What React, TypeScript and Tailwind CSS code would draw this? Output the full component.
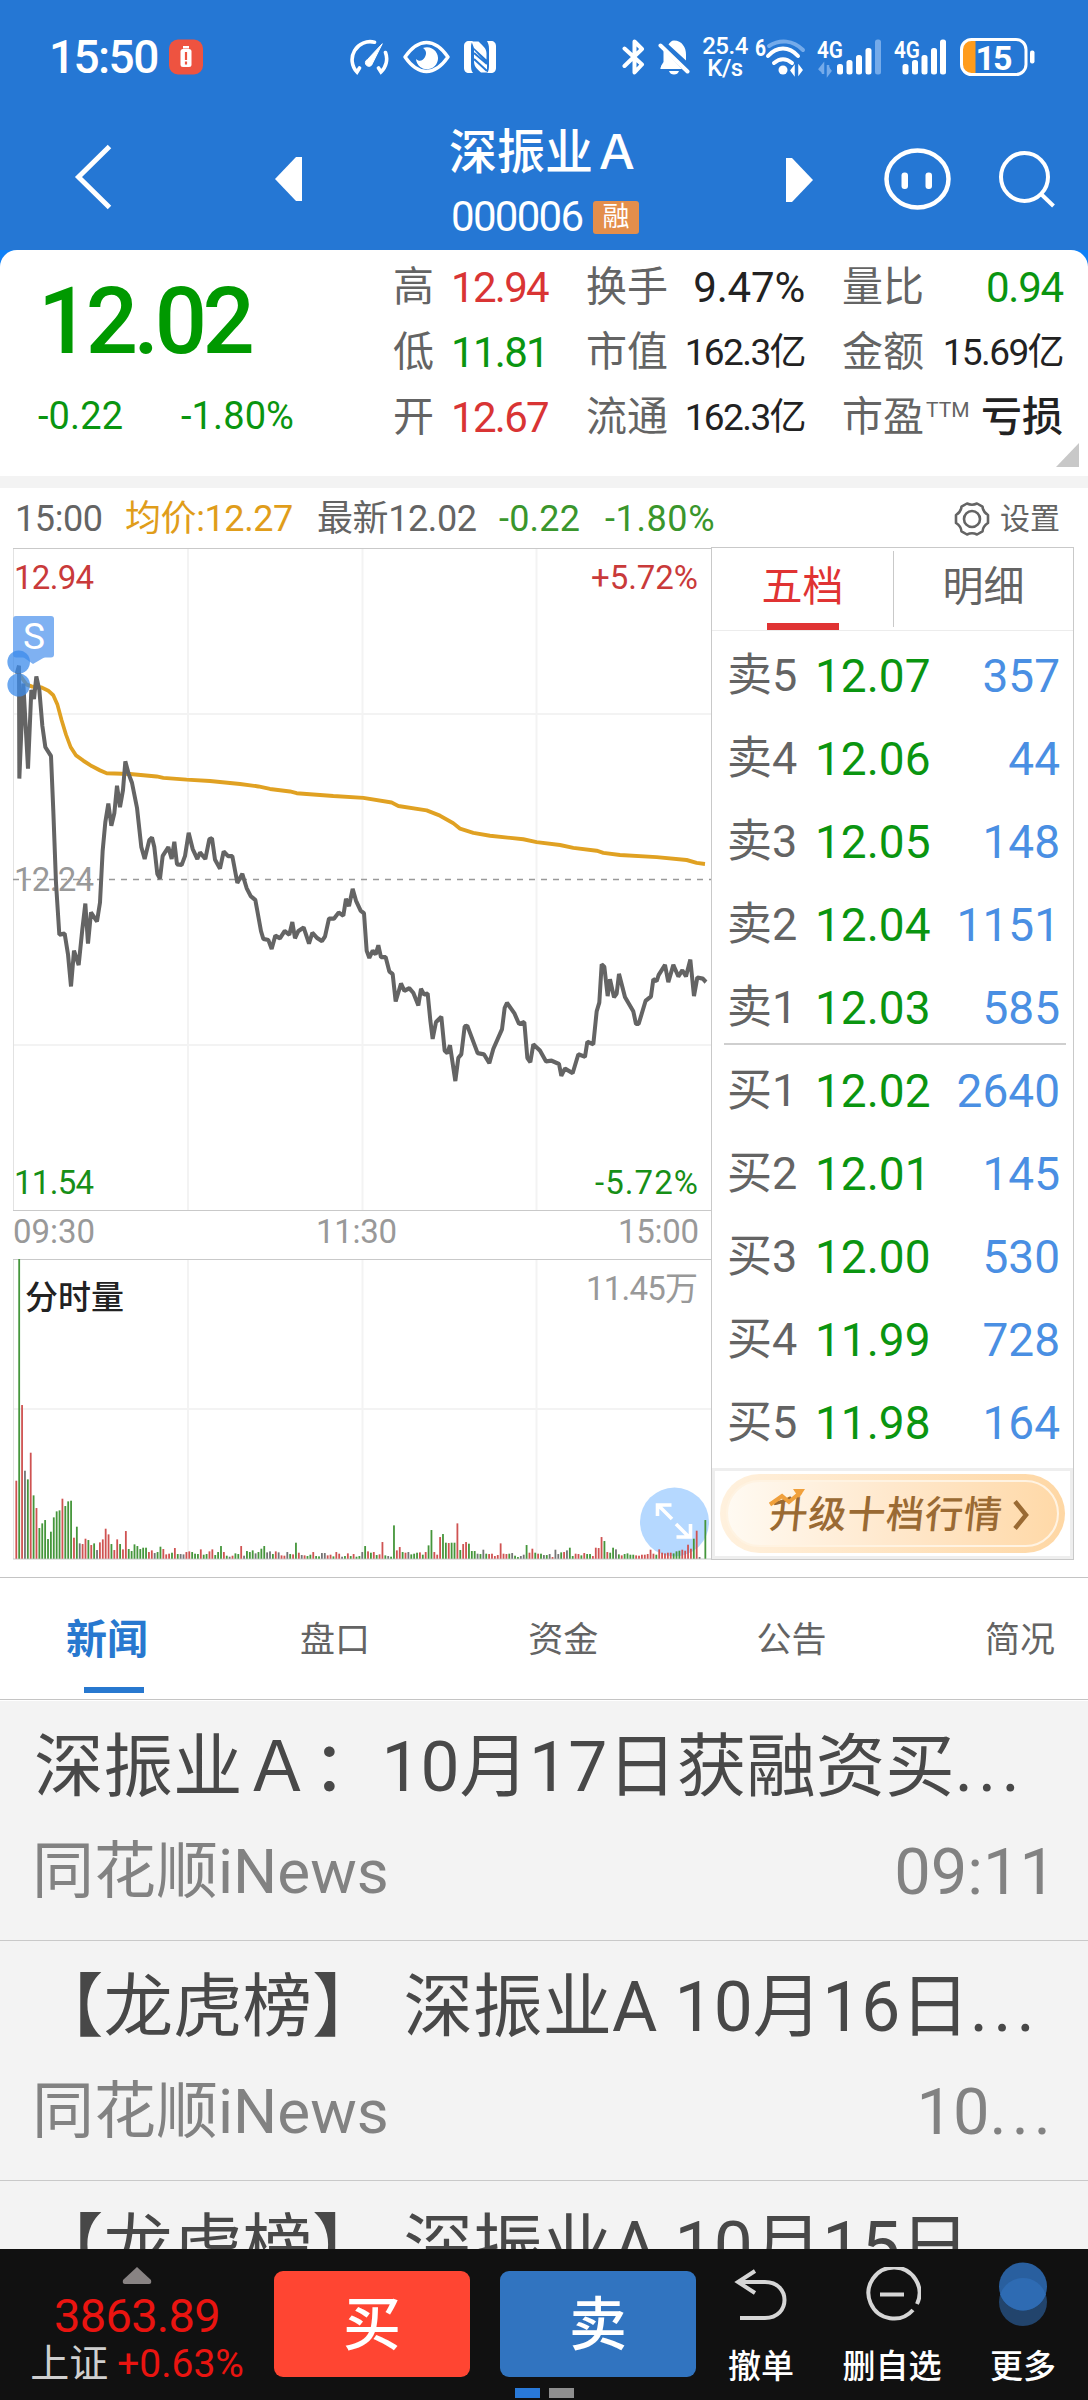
import React from 'react';

const PRICE_POINTS =
    '50,375 57,352 58,668 70,402 84,640 94,420 102,445 109,382 118,420 127,520 136,580 153,605 160,760 168,960 178,1105 194,1102 204,1160 213,1250 222,1150 236,1190 247,1090 256,1018 264,1130 273,1043 291,1068 300,1015 308,870 316,790 325,738 334,800 343,765 351,688 360,748 369,700 376,620 386,655 396,680 411,750 424,860 434,893 448,840 456,833 463,860 472,935 480,948 488,885 505,860 515,893 523,845 531,908 545,910 555,885 566,820 578,865 592,893 600,875 616,893 628,838 636,835 645,895 660,920 671,872 684,885 697,885 712,960 727,935 740,975 752,997 766,1008 783,1095 790,1117 805,1120 815,1145 826,1108 840,1115 854,1095 868,1105 877,1070 885,1115 895,1095 911,1085 927,1130 937,1100 952,1115 966,1123 975,1110 987,1060 1002,1060 1016,1043 1030,1052 1038,1005 1047,1025 1058,977 1068,1010 1082,1038 1092,1045 1100,1150 1108,1170 1118,1150 1127,1160 1135,1135 1143,1168 1157,1168 1168,1208 1178,1215 1187,1292 1203,1242 1213,1262 1228,1255 1240,1268 1255,1303 1263,1257 1272,1272 1283,1270 1291,1345 1298,1397 1308,1350 1324,1335 1334,1430 1342,1437 1350,1415 1366,1515 1375,1450 1384,1440 1394,1362 1402,1360 1433,1437 1452,1440 1468,1465 1480,1425 1506,1370 1514,1310 1521,1296 1543,1325 1557,1355 1573,1350 1582,1450 1591,1462 1600,1412 1620,1430 1638,1460 1655,1458 1677,1467 1684,1500 1695,1480 1718,1493 1735,1440 1755,1447 1762,1405 1780,1412 1790,1320 1798,1295 1805,1188 1813,1195 1823,1277 1830,1230 1842,1280 1850,1270 1857,1215 1875,1280 1900,1320 1908,1355 1916,1355 1937,1290 1953,1278 1960,1230 1970,1235 1976,1218 1995,1190 2005,1238 2020,1190 2035,1222 2047,1205 2058,1222 2071,1175 2082,1277 2092,1225 2108,1228 2118,1238';

const AVG_POINTS =
    '57,375 80,405 95,410 125,413 145,422 160,435 172,460 185,505 198,545 212,580 228,603 250,618 275,633 300,645 320,653 390,655 470,662 490,666 560,671 630,675 720,683 775,690 810,697 870,704 890,709 1000,717 1090,722 1175,735 1195,745 1280,757 1320,772 1360,793 1380,808 1420,820 1470,828 1570,838 1610,846 1680,854 1720,862 1790,870 1810,876 1860,882 1970,888 2060,896 2090,904 2115,907';

// one entry per minute: direction (r up, g down, k flat) + height
const VOLUME =
    'r234 g899 r461 k264 g238 r318 g190 r152 g92 g106 g116 g59 g81 g124 g142 g145 r180 g158 g172 g174 r63 g96 k46 r44 r60 g56 r41 g46 k26 r49 r58 r90 r73 g44 r26 r58 g44 r28 r83 g29 g23 g43 g38 g29 g33 g33 r20 r25 k17 g20 g36 r29 r13 r15 g18 r32 g14 k14 k13 r20 r22 g20 g15 g14 r28 g12 g14 r22 r28 g11 g20 g38 r20 g9 k6 r9 g16 g14 r38 k9 g23 g20 g25 k16 g20 g30 g38 k19 k22 g14 r22 k19 r10 r9 k20 g14 r13 g48 r18 k11 r10 g8 g12 r20 g8 g7 k17 k17 r10 r12 g7 r20 r15 k6 g8 r16 g8 r14 g6 g8 ' +
    'k20 g38 r22 g18 r20 g11 r13 r50 g10 k8 g6 g100 r25 r35 g20 r18 k20 g13 g15 g18 r19 g12 r20 g40 g86 r20 r12 r65 g74 g48 r47 g48 g48 r106 g26 r44 r50 g45 g23 g23 k15 g14 k27 g15 r14 r15 r8 r11 r46 r15 r14 g15 k17 g9 g5 k8 k12 g41 r18 r30 g18 r15 g15 k11 g11 k14 r5 k27 k14 g19 r20 k25 g33 g8 r15 r14 g10 r17 g14 g14 r8 r33 r32 r65 g53 r20 g18 g33 k28 g13 r10 g14 g16 g12 g12 r10 r9 r12 r12 r14 r27 r15 g12 r28 r18 r16 r18 r18 g16 g22 g24 r27 r24 r42 r30 g60 r84 k5 k0 g116';

const BAR_COLORS: Record<string, string> = { r: '#cf5352', g: '#45963b', k: '#747474' };

const QUOTE_A = [
    { label: '高', value: '12.94', color: 'text-[#d93434]' },
    { label: '低', value: '11.81', color: 'text-[#0a9510]' },
    { label: '开', value: '12.67', color: 'text-[#d93434]' },
];

const ORDERS = [
    ['卖5', '12.07', '357'],
    ['卖4', '12.06', '44'],
    ['卖3', '12.05', '148'],
    ['卖2', '12.04', '1151'],
    ['卖1', '12.03', '585'],
    ['买1', '12.02', '2640'],
    ['买2', '12.01', '145'],
    ['买3', '12.00', '530'],
    ['买4', '11.99', '728'],
    ['买5', '11.98', '164'],
];

const StatusBar: React.FC = () => (
    <div className="flex h-[114px] items-center pl-[49px] text-white">
        <span className="w-[120px] text-[46px] font-medium leading-none tracking-[-1.6px]">15:50</span>
        <svg width="34" height="36" viewBox="0 0 34 36">
            <rect width="34" height="35" y="0.5" rx="9" fill="#ee5340" />
            <rect x="14" y="7" width="6" height="2.5" fill="#fff" />
            <rect x="11.500" y="10" width="11" height="18" rx="2.500" fill="#fff" />
            <path d="M17 13v8M17 22.500v3" stroke="#ee5340" strokeWidth="2.200" />
        </svg>
        <svg className="ml-[146px]" width="40" height="36" viewBox="0 0 40 36" fill="none" stroke="#fff" strokeWidth="3.600" strokeLinecap="round">
            <path d="M25.500 3.200A18 18 0 0 0 8 33l2.500-4M36.500 13.500A18 18 0 0 1 32 33l-2.500-4" />
            <path d="M33 5L18.500 20.500a3.600 3.600 0 1 0 5 4z" fill="#fff" strokeWidth="1" />
        </svg>
        <svg className="ml-[14px]" width="47" height="34" viewBox="0 0 47 34">
            <path d="M2 17C9 7 16 2.500 23.500 2.500S38 7 45 17C38 27 31 31.500 23.500 31.500S9 27 2 17z" fill="none" stroke="#fff" strokeWidth="3.400" strokeLinejoin="round" />
            <path d="M20 8a11 11 0 1 1-7 11c3 3 7 2 9-2s1-7-2-9z" fill="#fff" />
        </svg>
        <svg className="ml-[14px]" width="32" height="34" viewBox="0 0 32 34" fill="#fff">
            <path d="M5 1h4c-2 2-2 4-2 8v15c0 4 0 7 2 9H5c-3 0-5-2-5-5V6c0-3 2-5 5-5zM27 1h-4c1 2 2 4 2 8v15c0 4 0 7-2 9h4c3 0 5-2 5-5V6c0-3-2-5-5-5z" />
            <path d="M7.500 1.500l7 0c5 5 8 7 8 12v6L10 8zM10 10l13 14v8.500h-6C12 28 10 26 10 21z" />
            <path d="M10 13l13 11M10 19l13 12" stroke="#2577d4" strokeWidth="2" />
        </svg>
        <svg className="ml-[126px]" width="23" height="36" viewBox="0 0 23 36" fill="none" stroke="#fff" strokeWidth="4" strokeLinejoin="round" strokeLinecap="round">
            <path d="M2.500 9.500L20 25.500L12.500 33.500V2.500L20 10L2.500 27" />
        </svg>
        <svg className="ml-[13px]" width="32" height="36" viewBox="0 0 32 36" fill="#fff">
            <path d="M10.500 5.500C12 3.500 13.500 1.500 16 1.500c8 0 12 7 12 14v6zM3 28V27l2.500-4V11L24 30H3c-1 0-1-1 0-2zM11 32h10a5.300 5.300 0 0 1-10 0z" />
            <path d="M2.500 6.500L29.500 32.500" stroke="#fff" strokeWidth="4" strokeLinecap="round" />
        </svg>
        <span className="ml-[9px] flex w-[52px] flex-col items-center text-[24px] font-medium leading-[22px] tracking-[-0.5px]">
            <span>25.4</span>
            <span>K/s</span>
        </span>
        <svg className="ml-[4px] overflow-visible" width="52" height="38" viewBox="0 0 52 38" fill="none" stroke="#fff" strokeWidth="4" strokeLinecap="round">
            <text x="0" y="18" fontSize="23" fontWeight="700" fill="#fff" stroke="none" textLength="11" lengthAdjust="spacingAndGlyphs">6</text>
            <path d="M14 8c11-7 24-6 34 4" stroke="#75abea" />
            <path d="M13 18c9-10 21-10 30 0M19 25c6-5 12-5 18 0" />
            <circle cx="28" cy="32" r="4.500" fill="#fff" stroke="none" />
            <path d="M36 32.500l3-4v8zM47 32l-3 4v-8z" fill="#fff" strokeWidth="1.500" />
        </svg>
        <svg className="ml-[11px] overflow-visible" width="63" height="36" viewBox="0 0 63 36">
            <text x="-1" y="19" fontSize="24" fontWeight="600" fill="#fff" textLength="26" lengthAdjust="spacingAndGlyphs">4G</text>
            <path d="M1 31l4-5v9M13 31l-3 4v-9" stroke="#75abea" strokeWidth="2.500" fill="#75abea" />
            <rect x="19" y="25" width="6" height="10.500" rx="2.500" fill="#fff" />
            <rect x="28.500" y="21" width="6" height="14.500" rx="2.500" fill="#fff" />
            <rect x="38" y="16" width="6" height="19.500" rx="2.500" fill="#fff" />
            <rect x="47.500" y="9" width="6" height="26.500" rx="2.500" fill="#fff" />
            <rect x="57" y="0.500" width="6" height="35" rx="2.500" fill="#75abea" />
        </svg>
        <svg className="ml-[13px] overflow-visible" width="53" height="36" viewBox="0 0 53 36">
            <text x="0" y="19" fontSize="24" fontWeight="600" fill="#fff" textLength="26" lengthAdjust="spacingAndGlyphs">4G</text>
            <rect x="8.500" y="25" width="6" height="10.500" rx="2.500" fill="#fff" />
            <rect x="18" y="21" width="6" height="14.500" rx="2.500" fill="#fff" />
            <rect x="27.500" y="16" width="6" height="19.500" rx="2.500" fill="#fff" />
            <rect x="37" y="9" width="6" height="26.500" rx="2.500" fill="#fff" />
            <rect x="46" y="0.500" width="6" height="35" rx="2.500" fill="#fff" />
        </svg>
        <svg className="ml-[13px] overflow-visible" width="76" height="40" viewBox="0 0 76 40">
            <path d="M13 2.500h2.500v35H13A10.500 10.500 0 0 1 2.500 27V13A10.500 10.500 0 0 1 13 2.500z" fill="#ff9c1c" />
            <rect x="1.500" y="2.500" width="64.500" height="35" rx="10" fill="none" stroke="#fff" strokeWidth="3" />
            <rect x="70" y="13.500" width="4.500" height="13" rx="2" fill="#fff" />
            <text x="34" y="32.500" fontSize="34" fontWeight="700" fill="#fff" textAnchor="middle" textLength="37">15</text>
        </svg>
    </div>
);

const NavBar: React.FC = () => (
    <div className="flex h-[136px] pl-[74px]">
        <svg className="mt-[30px]" width="40" height="66" viewBox="0 0 40 66" fill="none" stroke="#fff" strokeWidth="5">
            <path d="M35.500 2.500L4.500 33L35.500 63.500" />
        </svg>
        <svg className="ml-[161px] mt-[43px]" width="27" height="44" viewBox="0 0 27 44">
            <path d="M0 22L21 0h6v44h-6z" fill="#fff" />
        </svg>
        <div className="ml-[138px] w-[210px] shrink-0 pl-[9px] text-white">
            <div className="mt-[14px] whitespace-nowrap text-[48px] font-medium leading-[50px]">深振业Ａ</div>
            <div className="mt-[19px] flex h-[40px] items-center">
                <span className="w-[144px] pl-[2px] text-[42px] leading-none tracking-[-1.700px]">000006</span>
                <span className="flex h-[33px] w-[46px] items-center justify-center rounded-[3px] bg-[#e38e4b] text-[27px] leading-none">融</span>
            </div>
        </div>
        <svg className="ml-[136px] mt-[44px]" width="27" height="44" viewBox="0 0 27 44">
            <path d="M0 0h6l21 22L6 44H0z" fill="#fff" />
        </svg>
        <svg className="ml-[70px] mt-[34px]" width="68" height="64" viewBox="0 0 68 64">
            <ellipse cx="34.500" cy="31" rx="31" ry="28.500" fill="none" stroke="#fff" strokeWidth="4.500" />
            <rect x="18.500" y="24.500" width="6.500" height="16.500" rx="3" fill="#fff" />
            <rect x="42.500" y="24.500" width="6.500" height="16.500" rx="3" fill="#fff" />
        </svg>
        <svg className="ml-[47px] mt-[36px]" width="58" height="60" viewBox="0 0 58 60" fill="none" stroke="#fff" strokeWidth="4">
            <ellipse cx="26.500" cy="27" rx="23.500" ry="24" />
            <path d="M43 44L55.500 56" />
        </svg>
    </div>
);

const QuoteCard: React.FC = () => (
    <div className="bg-[#0f80f6]">
        <div className="flex h-[226px] rounded-t-[17px] bg-white text-[#646464]">
            <div className="w-[393px] text-[#0a9510]">
                <div className="flex h-[138px] items-center pl-[38px] pt-[5px] text-[92px] font-medium leading-none tracking-[-4.500px] text-[#009900]">12.02</div>
                <div className="flex h-[54px] items-center pl-[38px] pt-[2px] text-[38px] leading-none tracking-[0.100px]">
                    <span className="w-[143px]">-0.22</span>
                    <span>-1.80%</span>
                </div>
            </div>
            <div className="w-[193px] pt-[5px]">
                {QUOTE_A.map(q => (
                    <div key={q.label} className="flex h-[65px] items-center">
                        <span className="w-[58px] text-[41px] leading-none">{q.label}</span>
                        <span className={`${q.color} text-[42px] leading-none tracking-[-1.700px]`}>{q.value}</span>
                    </div>
                ))}
            </div>
            <div className="w-[219px] pt-[5px] text-[41px] leading-none">
                <div className="flex h-[65px] items-center justify-between">
                    <span>换手</span>
                    <span className="text-[42px] tracking-[-0.200px] text-[#222]">9.47%</span>
                </div>
                <div className="flex h-[65px] items-center justify-between">
                    <span>市值</span>
                    <span className="text-[37px] tracking-[-1.600px] text-[#222]">162.3亿</span>
                </div>
                <div className="flex h-[65px] items-center justify-between">
                    <span>流通</span>
                    <span className="text-[37px] tracking-[-1.600px] text-[#222]">162.3亿</span>
                </div>
            </div>
            <div className="ml-[37px] w-[221px] pt-[5px] text-[41px] leading-none">
                <div className="flex h-[65px] items-center justify-between">
                    <span>量比</span>
                    <span className="text-[42px] tracking-[-1.200px] text-[#0a9510]">0.94</span>
                </div>
                <div className="flex h-[65px] items-center justify-between">
                    <span>金额</span>
                    <span className="text-[37px] tracking-[-1.600px] text-[#222]">15.69亿</span>
                </div>
                <div className="flex h-[65px] items-center">
                    <span>市盈</span>
                    <span className="ml-[2px] h-[36px] text-[21px]">TTM</span>
                    <span className="ml-auto font-medium text-[#222]">亏损</span>
                </div>
            </div>
            <svg className="ml-[-7px] mt-[193px]" width="23" height="24" viewBox="0 0 23 24">
                <path d="M23 0v24H0z" fill="#c8c8c8" />
            </svg>
        </div>
    </div>
);

const InfoRow: React.FC = () => (
    <div className="flex h-[59px] items-center pl-[15px] pt-[2px] text-[36px] leading-none tracking-[-0.400px] text-[#646464]">
        <span className="w-[110px]">15:00</span>
        <span className="w-[192px] text-[#e09d1a]">均价:12.27</span>
        <span className="w-[182px]">最新12.02</span>
        <span className="w-[106px] tracking-[0.200px] text-[#3a962c]">-0.22</span>
        <span className="tracking-[0.600px] text-[#3a962c]">-1.80%</span>
        <svg className="ml-auto" width="38" height="38" viewBox="0 0 38 38" fill="none" stroke="#646464" strokeWidth="2.600" strokeLinejoin="round">
            <path d="M14 3.500q5 2.500 10 0l5.500 3.200q.5 5.300 5.500 8.300v8q-5 3-5.500 8.300L24 34.500q-5-2.500-10 0l-5.500-3.200Q8 26 3 23v-8q5-3 5.500-8.300z" />
            <circle cx="19" cy="19" r="8" />
        </svg>
        <span className="ml-[9px] mr-[28px] text-[30px] tracking-normal">设置</span>
    </div>
);

const TimeChart: React.FC = () => {
    const bars = VOLUME.split(' ').map((v, i) => ({
        x: 15.4 + i * 2.883,
        h: Number(v.slice(1)) / 3,
        fill: BAR_COLORS[v[0]],
    }));

    return (
        <svg className="shrink-0" width="711" height="1030" viewBox="0 547 711 1030">
            <g stroke="#f3f3f3" strokeWidth="2" fill="none">
                <path d="M188 548V1210M362.500 548V1210M536.500 548V1210M13 714H711M13 1045H711" />
                <path d="M188 1259V1559M362.500 1259V1559M536.500 1259V1559M13 1409H711" />
            </g>
            <path d="M13.500 548V1210M13.500 1259V1559" stroke="#e2e2e2" />
            <path d="M13 548.500H711M13 1210.500H711M13 1259.500H711M13 1559H711" stroke="#c9c9c9" />
            <path d="M13 879.500H711" stroke="#999" strokeWidth="1.500" strokeDasharray="6 6" />

            <text x="14" y="891" fontSize="33" fill="#999" textLength="80">12.24</text>

            <g transform="translate(0 540) scale(0.33333 0.35714)" fill="none" strokeLinejoin="bevel">
                <polyline points={AVG_POINTS} stroke="#e0a122" strokeWidth="11" />
                <polyline points={PRICE_POINTS} stroke="#646464" strokeWidth="12" />
            </g>

            <text x="14" y="589" fontSize="33" fill="#c93a3a" textLength="80">12.94</text>
            <text x="591" y="589" fontSize="33" fill="#c93a3a" textLength="107">+5.72%</text>
            <text x="14" y="1194" fontSize="33" fill="#178f17" textLength="80">11.54</text>
            <text x="595" y="1194" fontSize="33" fill="#178f17" textLength="103">-5.72%</text>

            <g fontSize="33" fill="#999">
                <text x="13" y="1243" textLength="82">09:30</text>
                <text x="316" y="1243" textLength="81">11:30</text>
                <text x="618" y="1243" textLength="81">15:00</text>
                <text x="586" y="1300" textLength="112">11.45万</text>
            </g>
            <text x="25" y="1309" fontSize="33" fontWeight="500" fill="#222">分时量</text>

            <rect x="13" y="616" width="41" height="41.500" rx="3" fill="#7fb1f2" />
            <path d="M23 657h22l-12 7z" fill="#7fb1f2" />
            <text x="34" y="649" fontSize="37" fill="#fff" textAnchor="middle">S</text>
            <ellipse cx="18.700" cy="662" rx="11.300" ry="11.600" fill="#3b8beb" opacity="0.75" />
            <ellipse cx="18.700" cy="685" rx="11.300" ry="11.600" fill="#3b8beb" opacity="0.75" />

            <circle cx="674.500" cy="1522" r="34.500" fill="#b5d8ff" />
            {bars.map((b, i) => (
                <rect key={i} x={b.x} y={1558.700 - b.h} width="1.800" height={b.h} fill={b.fill} />
            ))}
            <path d="M657.500 1516v-11h14M659 1506l13 13M676 1524l13 13M690.500 1524v13h-14" stroke="#fff" strokeWidth="3.600" fill="none" />
        </svg>
    );
};

const OrderBook: React.FC = () => (
    <div className="h-[1013px] w-[363px] border border-[#c9c9c9]">
        <div className="flex h-[83px] border-b border-[#ececec] text-[41px] leading-none">
            <div className="flex w-[181px] flex-col items-center pt-[19px] text-[#e03333]">
                <span className="h-[56px]">五档</span>
                <span className="h-[7px] w-[72px] bg-[#e03333]" />
            </div>
            <div className="mt-[3px] h-[76px] w-px bg-[#c9c9c9]" />
            <div className="flex-1 pt-[19px] text-center text-[#646464]">明细</div>
        </div>
        <div className="pl-[12px] pr-[7px] pt-[3px]">
            {ORDERS.map(([label, price, vol], i) => (
                <div
                    key={label}
                    className={`flex items-center pl-[3px] pr-[6px] text-[46px] leading-none ${i === 4 ? 'mb-[4px] h-[79px] border-b-2 border-[#cfcfcf] pt-[6px]' : 'h-[83px]'}`}
                >
                    <span className="w-[88px] text-[45px] text-[#646464]">{label}</span>
                    <span className="text-[#0a9510]">{price}</span>
                    <span className="ml-auto text-[#4a8fe3]">{vol}</span>
                </div>
            ))}
        </div>
        <div className="mt-[4px] flex h-[91px] items-center justify-center border-[3px] border-[#eeeeee]">
            <div className="flex h-[79px] w-[345px] rounded-full bg-linear-to-r from-[#fff1de] to-[#fed7a4] p-[6px]">
                <div className="relative flex flex-1 items-center rounded-full border-2 border-[#fff3e2] bg-linear-to-r from-[#fffaf2] via-[#ffe8cc] to-[#ffd9a8] pl-[42px]">
                    <span className="-skew-x-6 whitespace-nowrap pt-[3px] text-[38px] font-medium leading-none tracking-[0.800px] text-[#9a6a33]">升级十档行情</span>
                    <svg className="ml-[9px] mt-[3px]" width="18" height="30" viewBox="0 0 18 30">
                        <path d="M3 1.500L14 15L3 28.500" fill="none" stroke="#9a6a33" strokeWidth="4.500" />
                    </svg>
                    <svg className="absolute left-[40px] top-[6px]" width="38" height="20" viewBox="0 0 38 20">
                        <path d="M2 16.500L14 8l7 6L33 4" fill="none" stroke="#f0a03c" strokeWidth="4" />
                        <path d="M25 1h12l-6 9z" fill="#f0a03c" />
                    </svg>
                </div>
            </div>
        </div>
    </div>
);

const TABS = ['盘口', '资金', '公告', '简况'];

const NewsTabs: React.FC = () => (
    <div className="flex h-[123px] border-y border-[#c4c4c4] pl-[66px] text-[35px] leading-none text-[#646464]">
        <div className="w-[234px] shrink-0 pt-[42px]">
            <div className="h-[67px] text-[41px] font-bold text-[#2878cf]">新闻</div>
            <div className="ml-[18px] h-[6px] w-[60px] bg-[#2878cf]" />
        </div>
        {TABS.map(t => (
            <div key={t} className="w-[228.300px] shrink-0 pt-[45px] last:w-[80px]">{t}</div>
        ))}
    </div>
);

const NewsItem: React.FC<{ title: React.ReactNode; time?: React.ReactNode }> = ({ title, time }) => (
    <div className="h-[240px] border-b border-[#c9c9c9] pl-[34px] pr-[32px] pt-[28px]">
        <div className="whitespace-nowrap text-[69.500px] leading-[78px] text-[#484848]">{title}</div>
        {time && (
            <div className="flex items-center justify-between pt-[22px] text-[62px] leading-[86px] text-[#828282]">
                <span className="-ml-[2px]">同花顺iNews</span>
                <span className="text-[65px]">{time}</span>
            </div>
        )}
    </div>
);

const BottomBar: React.FC = () => (
    <div className="h-[151px] bg-[#111]">
        <div className="flex h-[139px] pt-[18px]">
            <div className="flex w-[274px] flex-col items-center">
                <svg className="shrink-0" width="30" height="17" viewBox="0 0 30 17">
                    <path d="M15 0l14 13q1 4-2 4H3q-3 0-2-4z" fill="#888383" />
                </svg>
                <span className="mt-[9px] text-[47px] leading-[46px] tracking-[-0.700px] text-[#ea1410]">3863.89</span>
                <span className="mt-[5px] flex items-center text-[39px] leading-[40px]">
                    <span className="text-[#cfcfcf]">上证</span>
                    <span className="ml-[9px] text-[#ea1410]">+0.63%</span>
                </span>
            </div>
            <button className="mt-[4px] h-[106px] w-[196px] rounded-[9px] bg-[#ff4532] pt-[2px] text-[58px] font-medium leading-none text-white">买</button>
            <button className="ml-[30px] mt-[4px] h-[106px] w-[196px] rounded-[9px] bg-[#3174c0] pt-[2px] text-[58px] font-medium leading-none text-white">卖</button>
            <div className="ml-[21px] flex w-[88px] flex-col items-center text-[33px] font-medium leading-none text-white">
                <svg className="h-[83px] shrink-0" width="56" height="83" viewBox="0 0 56 83" fill="none" stroke="#d6d6d6" strokeWidth="4">
                    <path d="M22 4L5 15l17 11M5 15h27c26 0 26 36 0 36H7" />
                </svg>
                <span className="whitespace-nowrap">撤单</span>
            </div>
            <div className="ml-[31px] flex w-[112px] flex-col items-center text-[33px] font-medium leading-none text-white">
                <svg className="h-[83px] shrink-0" width="58" height="83" viewBox="0 0 58 83" fill="none" stroke="#d6d6d6" strokeWidth="4">
                    <path d="M54 37A25.500 25.500 0 1 0 50 43" />
                    <path d="M17 27.500h24" />
                </svg>
                <span className="whitespace-nowrap">删自选</span>
            </div>
            <div className="ml-[31px] flex w-[88px] flex-col items-center text-[33px] font-medium leading-none text-white">
                <svg className="h-[83px] shrink-0 overflow-visible" width="50" height="83" viewBox="0 0 50 83">
                    <circle cx="25" cy="35" r="24" fill="#22446c" />
                    <circle cx="25" cy="19.500" r="24" fill="#295f9f" />
                    <path d="M2.300 27.250A24 24 0 0 1 47.700 27.250A24 24 0 0 1 2.300 27.250z" fill="#2e6bb3" />
                </svg>
                <span className="whitespace-nowrap">更多</span>
            </div>
        </div>
        <div className="flex justify-center gap-[9px]">
            <span className="h-[10px] w-[25px] bg-[#2979d8]" />
            <span className="h-[10px] w-[25px] bg-[#8f8f8f]" />
        </div>
    </div>
);

const App: React.FC = () => {
    const dots = <span className="tracking-[5px]">...</span>;

    return (
        <div className="flex h-[2400px] w-[1088px] flex-col overflow-hidden bg-white font-[Roboto,'Noto_Sans_CJK_SC',sans-serif]">
            <div className="h-[250px] shrink-0 bg-[#2577d4]">
                <StatusBar />
                <NavBar />
            </div>
            <QuoteCard />
            <div className="h-[12px] shrink-0 bg-[#f3f3f3]" />
            <InfoRow />
            <div className="flex h-[1030px] shrink-0">
                <TimeChart />
                <OrderBook />
            </div>
            <NewsTabs />
            <div className="h-px shrink-0 bg-white" />
            <div className="h-[548px] shrink-0 overflow-hidden bg-[#f3f3f3]">
                <NewsItem title={<>深振业Ａ：10月17日获融资买{dots}</>} time="09:11" />
                <NewsItem title={<>【龙虎榜】<span className="ml-[22px]">深振业A 10月16日{dots}</span></>} time={<>10{dots}</>} />
                <NewsItem title={<>【龙虎榜】<span className="ml-[22px]">深振业A 10月15日</span></>} />
            </div>
            <BottomBar />
        </div>
    );
};

export default App;
